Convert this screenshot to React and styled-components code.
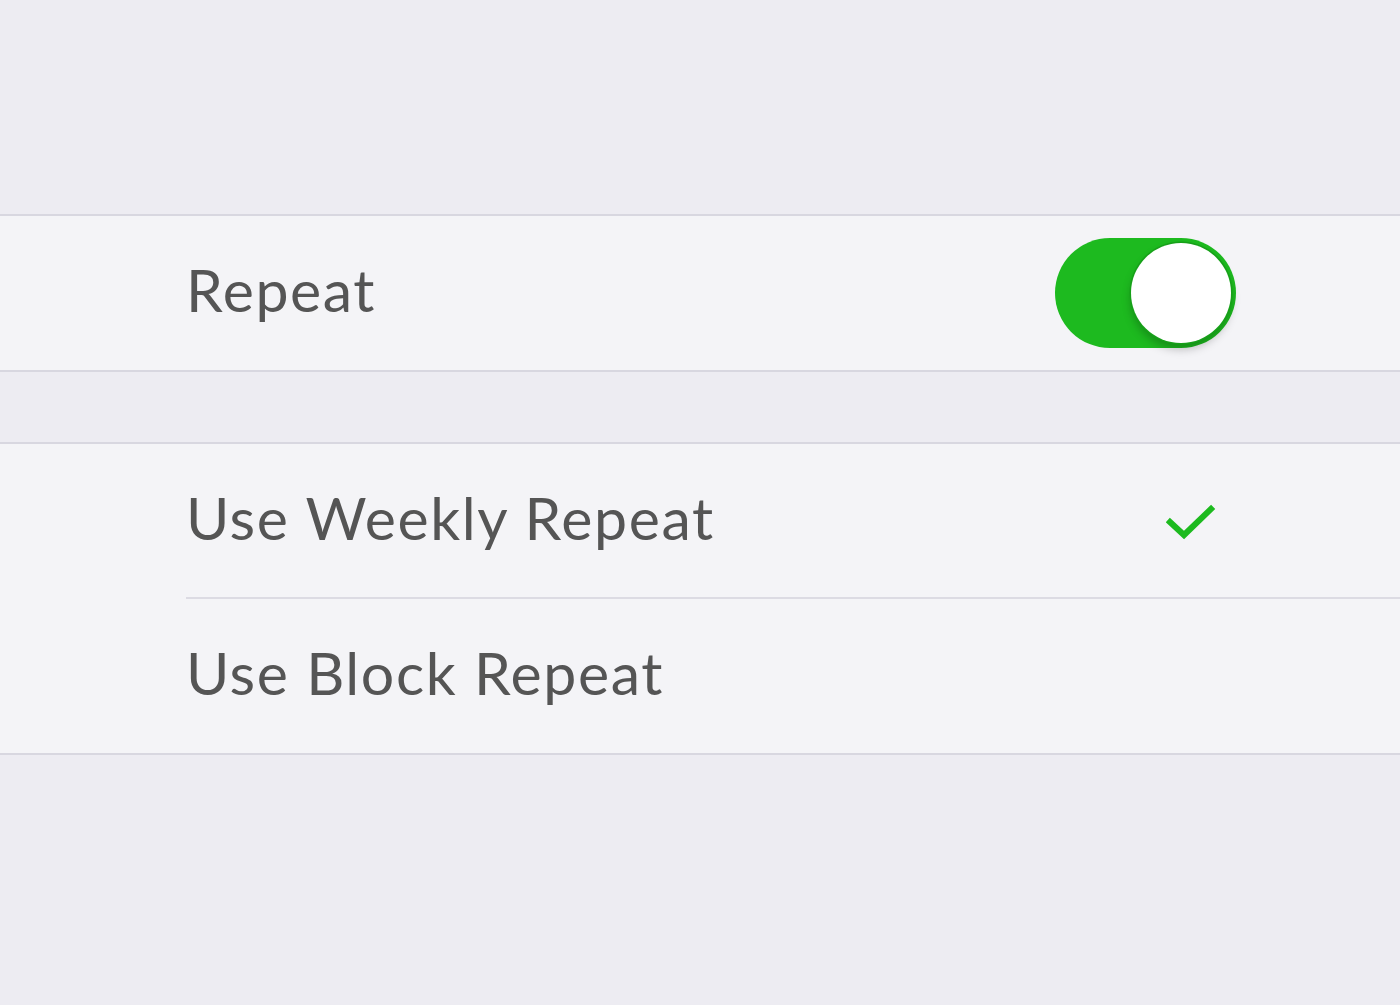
import React from "react";
import styled, { createGlobalStyle } from "styled-components";

const Global = createGlobalStyle`
  html, body { margin: 0; padding: 0; background: #edecf2; }
  body { font-family: Lato, "Noto Sans", sans-serif; }
`;

const Page = styled.div`
  width: 1400px;
  height: 1005px;
  background: #edecf2;
  display: flex;
  flex-direction: column;
  overflow: hidden;
`;

const Section = styled.div`
  margin-top: ${(p) => p.$gap}px;
  background: #f4f4f7;
  border-top: 2px solid #d8d7e0;
  border-bottom: 2px solid #d8d7e0;
`;

const Row = styled.div`
  height: ${(p) => (p.$divider ? 155 : 154)}px;
  display: flex;
  align-items: center;
  padding-left: 186px;
  padding-right: 164px;
  box-sizing: border-box;
  position: relative;
  ${(p) =>
    p.$divider &&
    `
    &::after {
      content: "";
      position: absolute;
      left: 186px;
      right: 0;
      bottom: 0;
      height: 2px;
      background: #dcdbe3;
    }
  `}
`;

const Label = styled.span`
  flex: 1;
  font-family: Lato, "Noto Sans", sans-serif;
  font-size: 59px;
  color: #555555;
  letter-spacing: 1.6px;
  margin-top: -8px;
`;

const Track = styled.div`
  width: 181px;
  height: 110px;
  border-radius: 55px;
  background: #1dba1f;
  display: flex;
  align-items: center;
  justify-content: flex-end;
  padding-right: 5px;
  box-sizing: border-box;
`;

const Knob = styled.div`
  width: 100px;
  height: 100px;
  border-radius: 50%;
  background: #ffffff;
  box-shadow: 0 0 0 1.5px #17a019, 0 6px 10px rgba(0, 0, 0, 0.25);
`;

const CheckBox = styled.div`
  width: 181px;
  display: flex;
  justify-content: flex-end;
  padding-right: 20px;
  box-sizing: border-box;
`;

const Toggle = () => (
  <Track>
    <Knob />
  </Track>
);

const Check = () => (
  <svg width="50" height="40" viewBox="0 0 50 40">
    <polyline
      points="4,20 18,33 45,7"
      fill="none"
      stroke="#1dba1f"
      strokeWidth="6"
      strokeLinecap="square"
      strokeLinejoin="miter"
    />
  </svg>
);

export default function App() {
  return (
    <Page>
      <Global />
      <Section $gap={214}>
        <Row>
          <Label>Repeat</Label>
          <Toggle />
        </Row>
      </Section>
      <Section $gap={70}>
        <Row $divider>
          <Label>Use Weekly Repeat</Label>
          <CheckBox>
            <Check />
          </CheckBox>
        </Row>
        <Row>
          <Label>Use Block Repeat</Label>
        </Row>
      </Section>
    </Page>
  );
}
